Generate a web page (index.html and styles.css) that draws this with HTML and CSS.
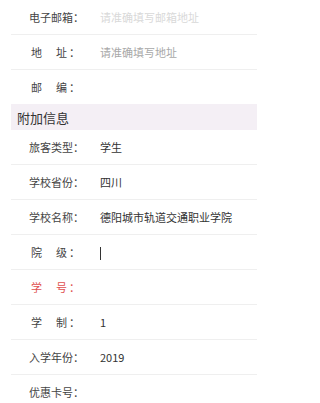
FILE: index.html
```html
<!DOCTYPE html>
<html lang="zh">
<head>
<meta charset="utf-8">
<title>附加信息</title>
<link rel="stylesheet" href="styles.css">
</head>
<body>
<div class="form">
  <div class="row"><span class="lbl">电子邮箱：</span><span class="val ph-light">请准确填写邮箱地址</span></div>
  <div class="row"><span class="lbl two">地<span class="sp"></span>址<span class="colon">：</span></span><span class="val ph">请准确填写地址</span></div>
  <div class="row last"><span class="lbl two">邮<span class="sp"></span>编<span class="colon">：</span></span><span class="val"></span></div>
  <div class="section">附加信息</div>
  <div class="row"><span class="lbl">旅客类型：</span><span class="val">学生</span></div>
  <div class="row"><span class="lbl">学校省份：</span><span class="val">四川</span></div>
  <div class="row"><span class="lbl">学校名称：</span><span class="val">德阳城市轨道交通职业学院</span></div>
  <div class="row"><span class="lbl two">院<span class="sp"></span>级<span class="colon">：</span></span><span class="val"><span class="cursor"></span></span></div>
  <div class="row"><span class="lbl two red">学<span class="sp"></span>号<span class="colon">：</span></span><span class="val"></span></div>
  <div class="row"><span class="lbl two">学<span class="sp"></span>制<span class="colon">：</span></span><span class="val">1</span></div>
  <div class="row"><span class="lbl">入学年份：</span><span class="val">2019</span></div>
  <div class="row"><span class="lbl">优惠卡号：</span><span class="val"></span></div>
</div>
</body>
</html>
```
FILE: styles.css
```css
html, body {
  margin: 0;
  padding: 0;
  background: #ffffff;
}
body {
  font-family: "Noto Sans CJK SC", "Noto Sans", sans-serif;
  color: #333333;
}
.form {
  width: 246px;
  margin-left: 11px;
}
.row {
  display: flex;
  align-items: center;
  height: 34px;
  border-bottom: 1px solid #efefef;
  padding-left: 18px;
  font-size: 11px;
  line-height: 14px;
}
.row.last {
  border-bottom: none;
}
.lbl {
  width: 71px;
  flex: none;
  color: #444444;
  white-space: nowrap;
}
.lbl.two {
  padding-left: 2px;
  width: 69px;
}
.lbl.red {
  color: #e0504f;
}
.sp {
  display: inline-block;
  width: 14px;
}
.colon {
  margin-left: 2px;
}
.val {
  color: #333333;
  white-space: nowrap;
}
.val.ph {
  color: #a8a8a8;
}
.val.ph-light {
  color: #d9d9d9;
}
.cursor {
  display: inline-block;
  width: 1px;
  height: 13px;
  background: #333333;
  vertical-align: middle;
}
.section {
  height: 26px;
  display: flex;
  align-items: center;
  padding-left: 6px;
  background: #f4eff5;
  font-size: 13px;
  color: #333333;
}
```
